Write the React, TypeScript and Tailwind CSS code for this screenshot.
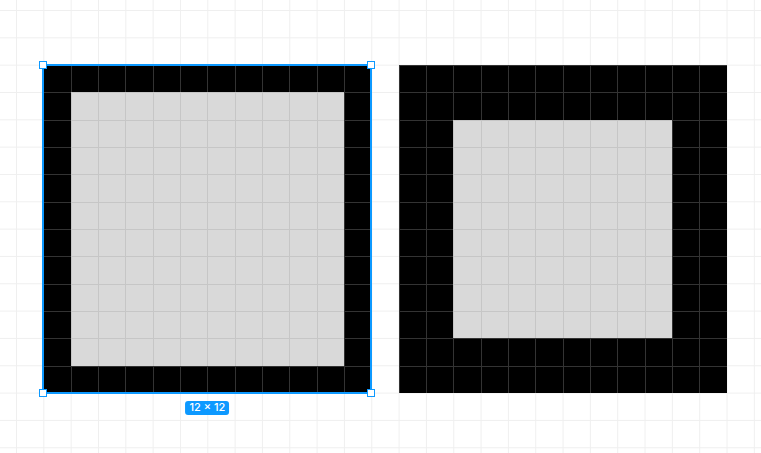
import React from "react";

function Square({ border }: { border: number }) {
  const cells = [];
  for (let r = 0; r < 12; r++) {
    for (let c = 0; c < 12; c++) {
      const isBlack = r < border || c < border || r >= 12 - border || c >= 12 - border;
      cells.push(
        <div
          key={`${r}-${c}`}
          className={
            isBlack
              ? "bg-black shadow-[inset_1px_1px_0_#333333]"
              : "bg-[#d9d9d9] shadow-[inset_1px_1px_0_#c6c6c6]"
          }
        />
      );
    }
  }
  return (
    <div className="grid h-[328px] w-[328px] grid-cols-12 grid-rows-12 shadow-[inset_-1px_-1px_0_#444444]">
      {cells}
    </div>
  );
}

export default function App() {
  return (
    <div
      className="h-[453px] w-[761px] overflow-hidden bg-white bg-[linear-gradient(to_right,#efefef_1px,transparent_1px),linear-gradient(to_bottom,#efefef_1px,transparent_1px)] [background-size:27.333px_27.333px] [background-position:16px_10px]"
      style={{ fontFamily: "Inter, 'Liberation Sans', sans-serif" }}
    >
      <div className="flex gap-[27.33px] pl-[43.33px] pt-[65px]">
        <div className="relative">
          <Square border={1} />
          <div className="pointer-events-none absolute inset-[-1px] border-2 border-[#0d99ff]" />
          <div className="absolute -left-[4px] -top-[4px] h-[8px] w-[8px] border border-[#0d99ff] bg-white" />
          <div className="absolute -right-[4px] -top-[4px] h-[8px] w-[8px] border border-[#0d99ff] bg-white" />
          <div className="absolute -bottom-[4px] -left-[4px] h-[8px] w-[8px] border border-[#0d99ff] bg-white" />
          <div className="absolute -bottom-[4px] -right-[4px] h-[8px] w-[8px] border border-[#0d99ff] bg-white" />
          <div className="absolute left-1/2 top-[335.5px] flex h-[14px] -translate-x-1/2 items-center rounded-[3px] bg-[#0d99ff] px-[4px] text-[11px] font-medium leading-none text-white whitespace-nowrap">
            12 × 12
          </div>
        </div>
        <Square border={2} />
      </div>
    </div>
  );
}
